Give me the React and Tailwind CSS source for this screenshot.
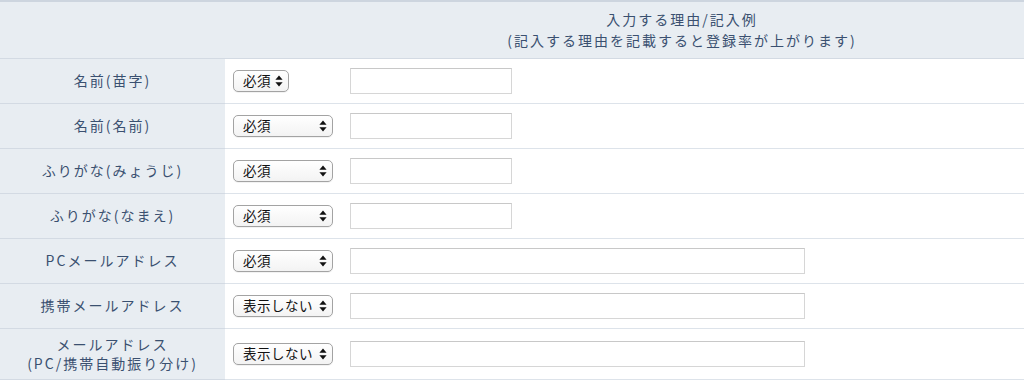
import React from 'react';

const rows = [
  { label: ['名前(苗字)'], value: '必須', selectW: 'w-[56px]', inputW: 'w-[162px]' },
  { label: ['名前(名前)'], value: '必須', selectW: 'w-[100px]', inputW: 'w-[162px]' },
  { label: ['ふりがな(みょうじ)'], value: '必須', selectW: 'w-[100px]', inputW: 'w-[162px]' },
  { label: ['ふりがな(なまえ)'], value: '必須', selectW: 'w-[100px]', inputW: 'w-[162px]' },
  { label: ['PCメールアドレス'], value: '必須', selectW: 'w-[100px]', inputW: 'w-[455px]' },
  { label: ['携帯メールアドレス'], value: '表示しない', selectW: 'w-[100px]', inputW: 'w-[455px]' },
  { label: ['メールアドレス', '(PC/携帯自動振り分け)'], value: '表示しない', selectW: 'w-[100px]', inputW: 'w-[455px]', tall: true },
];

function UpDown() {
  return (
    <svg width="8" height="12" viewBox="0 0 8 12" className="shrink-0">
      <path d="M4 0.5 L7.6 4.8 L0.4 4.8 Z" fill="#111" />
      <path d="M4 11.5 L7.6 7.2 L0.4 7.2 Z" fill="#111" />
    </svg>
  );
}

function FakeSelect({ value, width }) {
  return (
    <div
      className={`${width} h-[22px] flex items-center justify-between pl-[9px] pr-[5px] rounded-[5px] border border-[#a3a3a3] bg-gradient-to-b from-white to-[#f3f3f3] text-[13.5px] text-[#111] shadow-[0_1px_0_rgba(0,0,0,0.05)]`}
    >
      <span className="tracking-[0.5px] leading-none">{value}</span>
      <UpDown />
    </div>
  );
}

export default function App() {
  return (
    <div className="w-[1024px] h-[382px] bg-white overflow-hidden" style={{ fontFamily: '"Noto Sans CJK JP", "Noto Sans", sans-serif' }}>
      <table className="w-full border-collapse">
        <thead>
          <tr className="h-[57px] bg-[#e8edf2] border-t-2 border-[#cdd5df] border-b border-b-[#d3dae3]">
            <th className="w-[225px]" />
            <th className="w-[115px]" />
            <th className="text-center font-normal text-[14px] leading-[21px] tracking-[2px] text-[#3a5070]">
              <div>入力する理由/記入例</div>
              <div>(記入する理由を記載すると登録率が上がります)</div>
            </th>
          </tr>
        </thead>
        <tbody>
          {rows.map((r, i) => (
            <tr key={i} className={`${r.tall ? 'h-[51px]' : 'h-[45px]'} border-b border-[#dde3ea]`}>
              <td className="w-[225px] bg-[#e8edf2] border-b border-[#d3dae3] text-center text-[14px] leading-[19px] tracking-[2px] text-[#3a5070]">
                {r.label.map((l, j) => (
                  <div key={j}>{l}</div>
                ))}
              </td>
              <td className="w-[115px] pl-[8px]">
                <FakeSelect value={r.value} width={r.selectW} />
              </td>
              <td className="pl-[10px]">
                <input
                  type="text"
                  className={`${r.inputW} h-[26px] block border border-[#d6d6d6] border-t-[#c8c8c8] bg-white outline-none`}
                />
              </td>
            </tr>
          ))}
        </tbody>
      </table>
    </div>
  );
}
